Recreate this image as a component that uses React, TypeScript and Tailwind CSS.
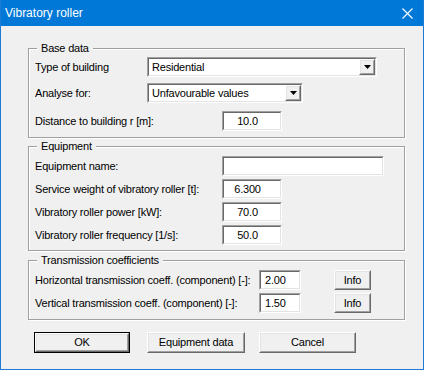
import type { ReactNode } from 'react'

const font = 'font-["Liberation_Sans",Arial,sans-serif]'

function Sunken({ className = '', children }: { className?: string; children?: ReactNode }) {
  return (
    <div className={`border border-t-[#a0a0a0] border-l-[#a0a0a0] border-b-white border-r-white ${className}`}>
      <div className="flex h-full items-center border border-t-[#696969] border-l-[#696969] border-b-[#e3e3e3] border-r-[#e3e3e3] bg-white">
        {children}
      </div>
    </div>
  )
}

function Raised({ className = '', children }: { className?: string; children?: ReactNode }) {
  return (
    <div className={`border border-t-white border-l-white border-b-[#696969] border-r-[#696969] ${className}`}>
      <div className="flex h-full items-center justify-center border border-t-[#e3e3e3] border-l-[#e3e3e3] border-b-[#a0a0a0] border-r-[#a0a0a0] bg-[#f0f0f0]">
        {children}
      </div>
    </div>
  )
}

function Combo({ value, width }: { value: string; width: string }) {
  return (
    <Sunken className={`h-[20px] ${width}`}>
      <span className="flex-1 pl-[3px]">{value}</span>
      <Raised className="h-[16px] w-[16px]">
        <svg width="7" height="4" viewBox="0 0 7 4">
          <path d="M0 0h7L3.5 4z" fill="#000" />
        </svg>
      </Raised>
    </Sunken>
  )
}

function Field({ value, width, align = 'center' }: { value: string; width: string; align?: 'center' | 'left' }) {
  return (
    <Sunken className={`h-[20px] ${width}`}>
      <span className={align === 'center' ? 'w-full pr-[9px] text-center' : 'pl-[4px]'}>{value}</span>
    </Sunken>
  )
}

function Group({ title, className = '', children }: { title: string; className?: string; children: ReactNode }) {
  return (
    <fieldset
      className={`m-0 min-w-0 border border-[#a0a0a0] px-[6px] shadow-[inset_1px_1px_0_#fff,1px_1px_0_#fff] ${className}`}
    >
      <legend className="ml-[2px] bg-[#f0f0f0] px-[4px] leading-[13px]">{title}</legend>
      {children}
    </fieldset>
  )
}

function Row({ label, labelWidth, className = '', children }: { label: string; labelWidth: string; className?: string; children: ReactNode }) {
  return (
    <div className={`flex items-center ${className}`}>
      <span className={`${labelWidth} shrink-0`}>{label}</span>
      {children}
    </div>
  )
}

export default function App() {
  return (
    <div className={`${font} flex h-[370px] w-[424px] flex-col border border-t-0 border-[#1c7cd5] bg-[#f0f0f0] text-[11px] tracking-[-0.2px] text-black`}>
      {/* title bar */}
      <div className="flex h-[26px] shrink-0 items-center justify-between bg-[#0078d7] pl-[4px] pr-[10px] text-[12px] tracking-normal text-white">
        <span>Vibratory roller</span>
        <svg width="11" height="11" viewBox="0 0 11 11" stroke="#fff" strokeWidth="1.1">
          <path d="M0.5 0.5l10 10M10.5 0.5l-10 10" />
        </svg>
      </div>

      <div className="flex flex-col pl-[27px] pr-[18px] pt-[16px]">
        <Group title="Base data" className="pb-[6px] pt-[2px]">
          <Row label="Type of building" labelWidth="w-[112px]">
            <Combo value="Residential" width="w-[230px]" />
          </Row>
          <Row label="Analyse for:" labelWidth="w-[112px]" className="mt-[6px]">
            <Combo value="Unfavourable values" width="w-[156px]" />
          </Row>
          <Row label="Distance to building r [m]:" labelWidth="w-[187px]" className="mt-[8px]">
            <Field value="10.0" width="w-[60px]" />
          </Row>
        </Group>

        <Group title="Equipment" className="mt-[2px] pb-[5px] pt-[3px]">
          <Row label="Equipment name:" labelWidth="w-[187px]">
            <Field value="" width="w-[162px]" />
          </Row>
          <Row label="Service weight of vibratory roller [t]:" labelWidth="w-[187px]" className="mt-[3px]">
            <Field value="6.300" width="w-[60px]" />
          </Row>
          <Row label="Vibratory roller power [kW]:" labelWidth="w-[187px]" className="mt-[3px]">
            <Field value="70.0" width="w-[60px]" />
          </Row>
          <Row label="Vibratory roller frequency [1/s]:" labelWidth="w-[187px]" className="mt-[3px]">
            <Field value="50.0" width="w-[60px]" />
          </Row>
        </Group>

        <Group title="Transmission coefficients" className="mt-[3px] pb-[6px] pt-[3px]">
          <Row label="Horizontal transmission coeff. (component) [-]:" labelWidth="w-[224px]">
            <Field value="2.00" width="w-[42px]" align="left" />
            <Raised className="ml-[33px] h-[20px] w-[37px]">Info</Raised>
          </Row>
          <Row label="Vertical transmission coeff. (component) [-]:" labelWidth="w-[224px]" className="mt-[3px]">
            <Field value="1.50" width="w-[42px]" align="left" />
            <Raised className="ml-[33px] h-[20px] w-[37px]">Info</Raised>
          </Row>
        </Group>

        <div className="mt-[12px] flex pl-[6px]">
          <div className="h-[21px] w-[96px] border border-black">
            <Raised className="h-full">OK</Raised>
          </div>
          <Raised className="ml-[17px] h-[21px] w-[98px]">Equipment data</Raised>
          <Raised className="ml-[14px] h-[21px] w-[97px]">Cancel</Raised>
        </div>
      </div>
    </div>
  )
}
